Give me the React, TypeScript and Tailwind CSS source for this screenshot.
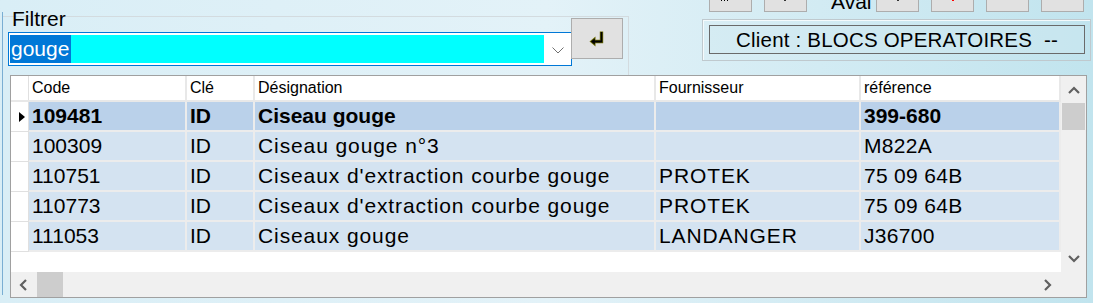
import React from "react";

type Row = {
  code: string;
  cle: string;
  designation: string;
  fournisseur: string;
  reference: string;
};

const rows: Row[] = [
  { code: "109481", cle: "ID", designation: "Ciseau gouge", fournisseur: "", reference: "399-680" },
  { code: "100309", cle: "ID", designation: "Ciseau gouge n°3", fournisseur: "", reference: "M822A" },
  { code: "110751", cle: "ID", designation: "Ciseaux d'extraction courbe gouge", fournisseur: "PROTEK", reference: "75 09 64B" },
  { code: "110773", cle: "ID", designation: "Ciseaux d'extraction courbe gouge", fournisseur: "PROTEK", reference: "75 09 64B" },
  { code: "111053", cle: "ID", designation: "Ciseaux gouge", fournisseur: "LANDANGER", reference: "J36700" },
];

// column widths include the 2px gap on the right
const cols = [
  { key: "code", label: "Code", w: "w-[158px]", track: "" },
  { key: "cle", label: "Clé", w: "w-[68px]", track: "" },
  { key: "designation", label: "Désignation", w: "w-[401px]", track: "tracking-[0.9px]" },
  { key: "fournisseur", label: "Fournisseur", w: "w-[205px]", track: "tracking-[0.9px]" },
  { key: "reference", label: "référence", w: "w-[200px]", track: "tracking-[0.3px]" },
] as const;

function Caret({ dir }: { dir: "up" | "down" | "left" | "right" }) {
  const pts =
    dir === "up"
      ? "1,8 6,3 11,8"
      : dir === "down"
      ? "1,3 6,8 11,3"
      : dir === "left"
      ? "8,1 3,6 8,11"
      : "3,1 8,6 3,11";
  return (
    <svg width="12" height="12" viewBox="0 0 12 12">
      <polyline points={pts} fill="none" stroke="#606060" strokeWidth="2.2" />
    </svg>
  );
}

function TopButton({ mark }: { mark?: React.ReactNode }) {
  return (
    <div className="w-[43px] h-[42px] -mt-[30px] bg-[#e1e1e1] border border-[#adadad] flex items-end justify-center">
      <div className="mb-[10px]">{mark}</div>
    </div>
  );
}

export default function App() {
  return (
    <div className="w-[1093px] h-[303px] overflow-hidden flex bg-linear-to-r from-[#d9eef6] via-[#e3f2f8] to-[#c1e4ee] font-['Liberation_Sans',Arial,sans-serif] text-black">
      <div className="w-[2px]" />
      <div className="w-px bg-[#7aaed3] mt-[12px] mb-[8px]" />
      <div className="flex-1 flex flex-col">
        {/* top area */}
        <div className="flex h-[75px] items-start">
          {/* Filtrer group */}
          <div className="w-[626px] h-[59px] mt-[16px] border-t border-r border-[#d3dbdf] relative flex items-start">
            <span className="absolute left-[9px] -top-[10px] text-[21px] leading-[24px]">Filtrer</span>
            <div className="ml-[5px] mt-[15px] w-[564px] h-[34px] border border-[#0078d7] bg-white flex items-stretch py-[2px] pl-px">
              <div className="w-[534px] bg-[#00ffff] flex items-stretch">
                <span className="bg-[#0078d7] text-white text-[21px] leading-[28px] pl-px pr-[2px]">gouge</span>
              </div>
              <div className="flex-1 flex items-center justify-center pt-[3px]">
                <svg width="12" height="7" viewBox="0 0 12 7">
                  <polyline points="0.5,0.5 6,6 11.5,0.5" fill="none" stroke="#707070" strokeWidth="1" />
                </svg>
              </div>
            </div>
            <div className="-ml-px mt-px w-[52px] h-[41px] bg-[#e1e1e1] border border-[#adadad] flex items-center justify-center">
              <svg width="16" height="17" viewBox="0 0 16 17">
                <path d="M12.5 1.5 V11.5 H5" fill="none" stroke="#6b6b00" strokeWidth="3.4" />
                <path d="M0.5 11.5 L6.5 6.5 L6.5 16.5 Z" fill="#6b6b00" />
                <path d="M12.5 2 V11.5 H5" fill="none" stroke="#000" strokeWidth="1.8" />
                <path d="M1.8 11.5 L5.8 8.2 L5.8 14.8 Z" fill="#000" />
              </svg>
            </div>
          </div>

          {/* right side */}
          <div className="flex-1 flex flex-col">
            <div className="h-[12px] flex items-start ml-[80px]">
              <TopButton
                mark={
                  <div className="flex gap-[2px] -ml-[10px]">
                    <div className="w-px h-[2px] bg-black" />
                    <div className="w-px h-[2px] bg-black" />
                    <div className="w-px h-[2px] bg-black" />
                  </div>
                }
              />
              <div className="w-[12px]" />
              <TopButton mark={<div className="w-[2px] h-[2px] bg-[#333] -ml-[2px]" />} />
              <span className="w-[45px] ml-[24px] -mt-[10px] text-[21px] leading-[24px] whitespace-nowrap overflow-hidden">
                Aval
              </span>
              <TopButton mark={<div className="w-[2px] h-px bg-[#333]" />} />
              <div className="w-[12px]" />
              <TopButton mark={<div className="w-[2px] h-[3px] bg-[#ff0000]" />} />
              <div className="w-[12px]" />
              <TopButton />
              <div className="w-[12px]" />
              <TopButton />
            </div>
            <div className="mt-[7px] ml-[73px] w-[389px] h-[42px] border border-[#bfc9ce] shadow-[inset_1px_1px_0_#f4fafc]">
              <div className="ml-[6px] mt-[5px] w-[376px] h-[29px] border border-[#6a6a6a] bg-[#cfe9f1]/40 flex items-center justify-center">
                <span className="text-[20.5px] leading-[24px] tracking-[0.2px] whitespace-pre">Client : BLOCS OPERATOIRES  --</span>
              </div>
            </div>
          </div>
        </div>

        {/* grid */}
        <div className="ml-[7px] w-[1077px] h-[223px] border border-[#a0a0a0] bg-white flex flex-col">
          <div className="flex h-[196px]">
            <div className="w-[1050px] flex flex-col">
              {/* header */}
              <div className="flex h-[26px] border-b-2 border-[#e8e8e8]">
                <div className="w-[18px] border-r border-[#e0e0e0]" />
                {cols.map((c) => (
                  <div
                    key={c.key}
                    className={`${c.w} h-full border-r-2 border-[#e8e8e8] pl-[3px] text-[16px] leading-[24px] whitespace-nowrap`}
                  >
                    {c.label}
                  </div>
                ))}
              </div>
              {/* rows */}
              {rows.map((r, i) => (
                <div key={r.code} className="flex h-[30px]">
                  <div className="w-[18px] border-r border-b border-[#e0e0e0] flex items-center justify-end pr-[3px]">
                    {i === 0 && (
                      <svg width="6" height="10" viewBox="0 0 6 10">
                        <path d="M0 0 L6 5 L0 10 Z" fill="#000" />
                      </svg>
                    )}
                  </div>
                  {cols.map((c) => (
                    <div
                      key={c.key}
                      className={`${c.w} h-full border-r-2 border-b-2 border-[#ececec] pl-[3px] text-[21px] leading-[28px] whitespace-nowrap overflow-hidden ${
                        i === 0 ? "bg-[#bad1ea] font-bold" : `bg-[#d4e3f1] ${c.track}`
                      }`}
                    >
                      {r[c.key]}
                    </div>
                  ))}
                </div>
              ))}
            </div>
            {/* vertical scrollbar */}
            <div className="w-[25px] bg-[#f0f0f0] flex flex-col">
              <div className="h-[26px] flex items-center justify-center pt-[3px]">
                <Caret dir="up" />
              </div>
              <div className="mt-px mx-px h-[27px] bg-[#cdcdcd]" />
              <div className="flex-1" />
              <div className="h-[26px] flex items-center justify-center">
                <Caret dir="down" />
              </div>
            </div>
          </div>
          {/* horizontal scrollbar */}
          <div className="flex h-[25px]">
            <div className="w-[1050px] bg-[#f0f0f0] flex">
              <div className="w-[26px] flex items-center justify-center">
                <Caret dir="left" />
              </div>
              <div className="w-[26px] bg-[#cdcdcd]" />
              <div className="flex-1" />
              <div className="w-[26px] flex items-center justify-center">
                <Caret dir="right" />
              </div>
            </div>
            <div className="w-[25px] bg-[#f0f0f0]" />
          </div>
        </div>
      </div>
    </div>
  );
}
